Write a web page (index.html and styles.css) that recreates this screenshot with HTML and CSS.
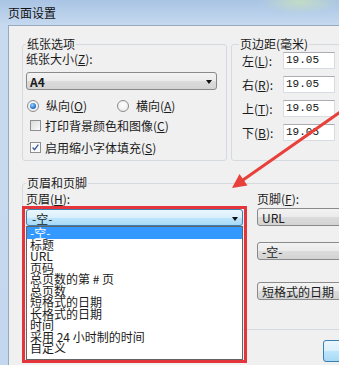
FILE: index.html
```html
<!DOCTYPE html>
<html lang="zh-CN">
<head>
<meta charset="utf-8">
<title>页面设置</title>
<link rel="stylesheet" href="styles.css">
</head>
<body>
<div class="win">
  <div class="titlebar">页面设置</div>
  <div class="client">
    <div class="row-top">
      <fieldset class="grp paper">
        <legend>纸张选项</legend>
        <div class="lbl">纸张大小(<u>Z</u>):</div>
        <div class="select paper-size"><span class="val">A4</span><i class="caret"></i></div>
        <div class="radios">
          <div class="opt first"><span class="radio on"></span>纵向(<u>O</u>)</div>
          <div class="opt"><span class="radio"></span>横向(<u>A</u>)</div>
        </div>
        <div class="opt chk"><span class="check"></span>打印背景颜色和图像(<u>C</u>)</div>
        <div class="opt chk second"><span class="check on"><svg viewBox="0 0 11 11" width="11" height="11"><path d="M2 5.5 L4.3 8.2 L9 2" fill="none" stroke="#3b5998" stroke-width="1.6"/></svg></span>启用缩小字体填充(<u>S</u>)</div>
      </fieldset>
      <fieldset class="grp margins">
        <legend>页边距(毫米)</legend>
        <div class="mrow"><span class="mlbl">左(<u>L</u>):</span><span class="num">19.05</span></div>
        <div class="mrow"><span class="mlbl">右(<u>R</u>):</span><span class="num">19.05</span></div>
        <div class="mrow"><span class="mlbl">上(<u>T</u>):</span><span class="num">19.05</span></div>
        <div class="mrow"><span class="mlbl">下(<u>B</u>):</span><span class="num">19.05</span></div>
      </fieldset>
    </div>
    <fieldset class="grp hf">
      <legend>页眉和页脚</legend>
      <div class="hf-cols">
        <div class="hf-left">
          <div class="lbl">页眉(<u>H</u>):</div>
          <div class="combo">
            <div class="select open"><span class="val">-空-</span><i class="caret"></i></div>
            <ul class="list">
              <li class="sel">-空-</li>
              <li>标题</li>
              <li>URL</li>
              <li>页码</li>
              <li>总页数的第 # 页</li>
              <li>总页数</li>
              <li>短格式的日期</li>
              <li>长格式的日期</li>
              <li>时间</li>
              <li>采用 24 小时制的时间</li>
              <li>自定义</li>
            </ul>
            <div class="redbox"></div>
          </div>
        </div>
        <div class="hf-right">
          <div class="lbl">页脚(<u>F</u>):</div>
          <div class="select f1"><span class="val">URL</span><i class="caret"></i></div>
          <div class="select f2"><span class="val">-空-</span><i class="caret"></i></div>
          <div class="select f3"><span class="val">短格式的日期</span><i class="caret"></i></div>
        </div>
      </div>
    </fieldset>
    <div class="btnrow"><div class="btn"></div></div>
  </div>
  <svg class="arrow" viewBox="0 0 339 365" width="339" height="365">
    <line x1="346" y1="108" x2="243" y2="180" stroke="#e8403b" stroke-width="3" stroke-linecap="round"/>
    <polygon points="232,188 247.5,185.5 239.5,174" fill="#e8403b"/>
  </svg>
</div>
</body>
</html>
```
FILE: styles.css
```css
* { box-sizing: border-box; }
html, body { margin: 0; padding: 0; overflow: hidden; }
body {
  width: 339px;
  height: 365px;
  background: #c4d7ed;
  font: 12px/12px "Noto Sans CJK SC", "Noto Sans CJK JP", sans-serif;
  color: #1b1b1b;
}
u { text-decoration: underline; text-underline-offset: 1px; }

.win {
  position: relative;
  width: 339px;
  height: 365px;
  overflow: hidden;
  background: linear-gradient(180deg, #b8cfe9 0, #c8daef 30px, #c3d7ee 100%);
}
.titlebar {
  height: 25px;
  padding: 6px 0 0 8px;
  line-height: 13px;
  font-size: 12px;
  color: #111;
  background:
    radial-gradient(ellipse 40px 12px at 300px 2px, rgba(200,225,190,0.8), rgba(200,225,190,0)),
    linear-gradient(180deg, #a9c4e4 0, #c5d9ef 100%);
}
.client {
  margin-left: 8px;
  width: 420px;
  height: 375px;
  background: #f0f0f0;
  border-top: 1px solid #98a9bb;
  border-left: 1px solid #98a9bb;
  padding: 12px 0 0 13px;
}

/* group boxes */
.grp {
  margin: 0;
  min-width: 0;
  border: 1px solid #d5dadf;
  border-radius: 3px;
  padding: 0 3px;
}
.grp legend {
  padding: 0 1px;
  font-size: 12px;
  line-height: 12px;
}
.row-top { display: flex; gap: 4px; width: 380px; }
.paper { width: 205px; flex: none; padding-bottom: 6px; }
.margins { width: 171px; flex: none; padding: 0 7px 19px 7px; }

.lbl { margin-top: 3px; white-space: nowrap; }

/* select boxes */
.select {
  position: relative;
  height: 18px;
  border: 1px solid #8a8a8a;
  border-radius: 3px;
  background: linear-gradient(180deg, #f3f3f3 0, #ebebeb 50%, #dcdcdc 51%, #d3d3d3 100%);
  padding: 2px 0 0 3px;
  line-height: 13px;
  white-space: nowrap;
}
.caret {
  position: absolute;
  right: 4px;
  top: 7px;
  width: 0;
  height: 0;
  border-left: 3.5px solid transparent;
  border-right: 3.5px solid transparent;
  border-top: 4px solid #111;
}
.paper-size { width: 191px; margin-top: 7px; font-weight: bold; }

.radios { display: flex; margin-top: 9px; height: 13px; line-height: 13px; }
.opt { display: flex; align-items: center; line-height: 13px; white-space: nowrap; }
.radios .opt.first { width: 91px; padding-left: 1px; flex: none; }
.radio {
  width: 12px;
  height: 12px;
  border-radius: 50%;
  border: 1px solid #8c8c8c;
  background: radial-gradient(circle at 50% 40%, #ffffff 0, #e6e6e6 100%);
  margin-right: 7px;
  flex: none;
  position: relative;
}
.radio.on::after {
  content: "";
  position: absolute;
  left: 2px;
  top: 2px;
  width: 6px;
  height: 6px;
  border-radius: 50%;
  background: radial-gradient(circle at 40% 35%, #9fd5ff 0, #2a7dd1 55%, #124f91 100%);
}
.chk { margin-top: 7px; padding-left: 4px; }
.chk.second { margin-top: 9px; }
.check {
  width: 11px;
  height: 11px;
  border: 1px solid #8e8f8f;
  background: linear-gradient(135deg, #dcdcdc, #fbfbfb);
  margin-right: 4px;
  flex: none;
  display: flex;
  align-items: center;
  justify-content: center;
}
.check svg { display: block; }
.check.on { background: #fafafa; }

/* margins */
.mrow { display: flex; align-items: center; height: 17px; margin-top: 7px; }
.mrow:first-of-type { margin-top: 2px; }
.mlbl { width: 44px; flex: none; padding-left: 3px; white-space: nowrap; }
.num {
  width: 52px;
  flex: none;
  height: 17px;
  background: #fff;
  border: 1px solid #d8dde4;
  border-top-color: #abadb3;
  font: 11px/15px "Liberation Mono", monospace;
  padding-left: 2px;
  color: #111;
}

/* header & footer */
.hf { width: 380px; margin-top: 16px; padding-bottom: 29px; }
.hf-cols { display: flex; gap: 14px; }
.hf-left { width: 217px; flex: none; }
.hf-left .lbl, .hf-right .lbl { margin-top: 4px; }
.combo { position: relative; margin-top: 4px; }
.select.open {
  height: 17px;
  border-color: #3c7fb1;
  background: linear-gradient(180deg, #eaf6fd 0, #d9f0fc 50%, #bee6fd 51%, #a7d9f5 100%);
  padding-left: 5px;
}
.list {
  position: absolute;
  top: 17px;
  left: 0;
  width: 217px;
  height: 134px;
  margin: 0;
  padding: 0;
  list-style: none;
  background: #fff;
  border: 1px solid #646464;
  z-index: 2;
}
.list li {
  height: 11.5px;
  line-height: 11.5px;
  padding-left: 3px;
  white-space: nowrap;
}
.list li.sel { background: #3399ff; color: #fff; }
.redbox {
  position: absolute;
  left: -4px;
  top: -3px;
  width: 225px;
  height: 157px;
  border: 3px solid #e2363c;
  z-index: 3;
}
.hf-right { width: 217px; flex: none; }
.hf-right .select { padding-left: 4px; }
.f1 { margin-top: 3px; }
.f2 { margin-top: 16px; }
.f3 { margin-top: 22px; }

.btnrow {
  width: 380px;
  margin-top: 10px;
  display: flex;
  justify-content: flex-end;
}
.btn {
  width: 79px;
  height: 22px;
  border: 1px solid #3c7fb1;
  border-radius: 3px;
  background: linear-gradient(180deg, #eaf6fd 0, #d9f0fc 50%, #bee6fd 51%, #a7d9f5 100%);
}

.arrow {
  position: absolute;
  left: 0;
  top: 0;
  pointer-events: none;
  z-index: 5;
}
```
